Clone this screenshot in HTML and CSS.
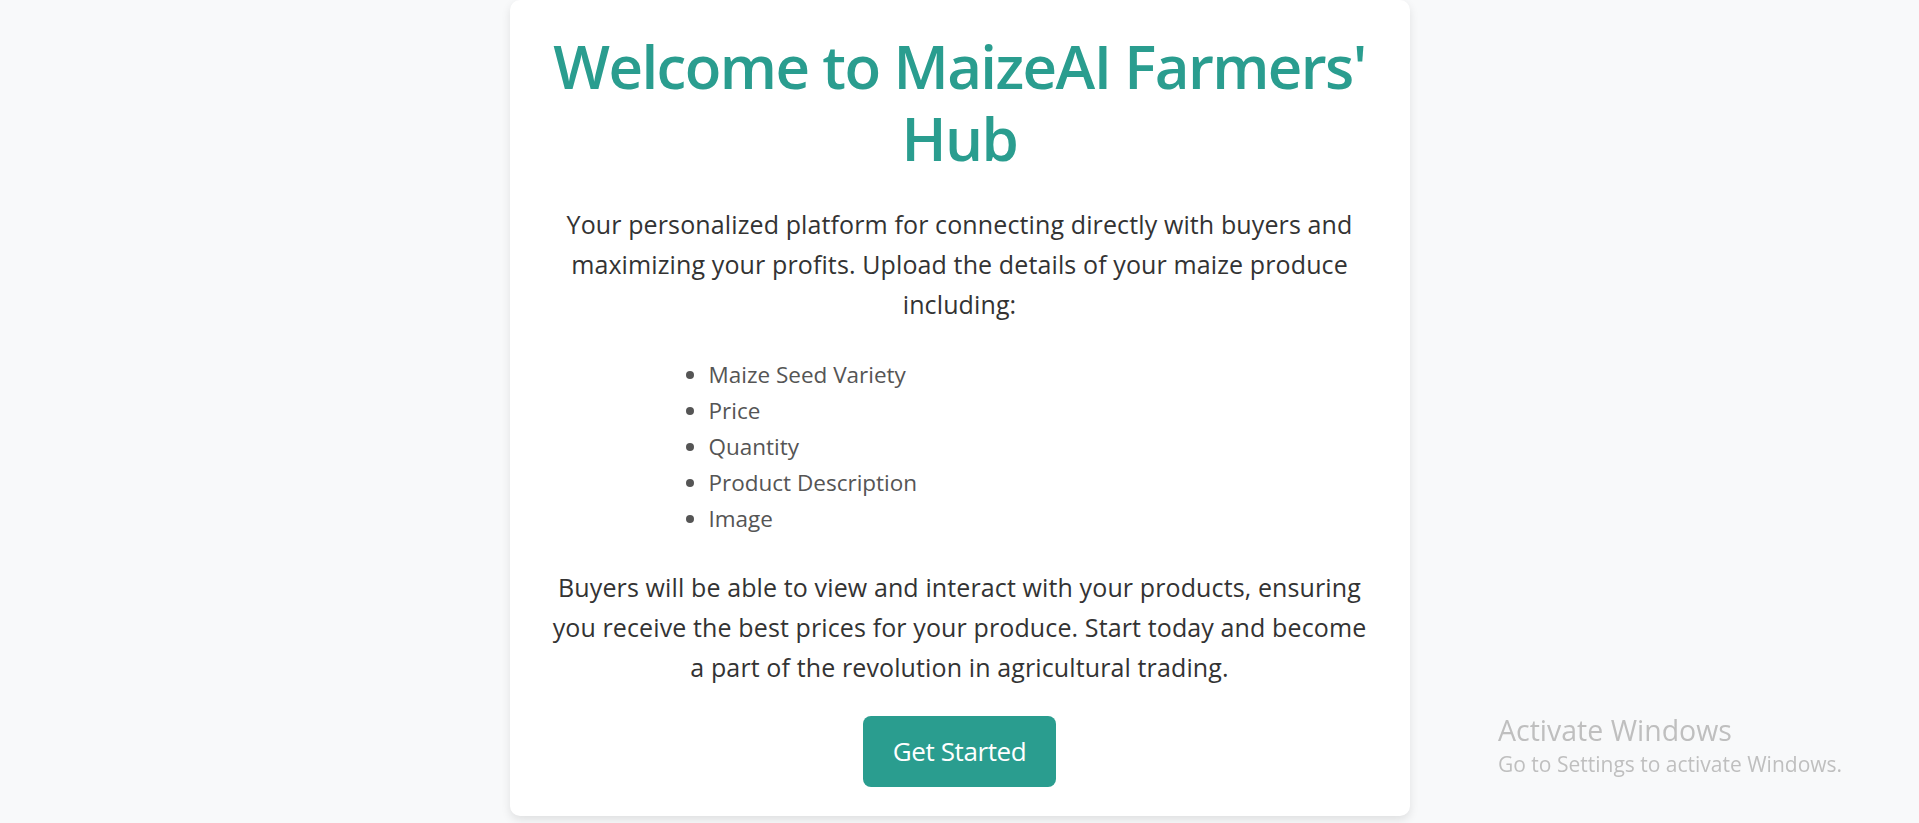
FILE: index.html
```html
<!DOCTYPE html>
<html lang="en">
<head>
<meta charset="utf-8">
<title>MaizeAI Farmers' Hub</title>
<link rel="stylesheet" href="styles.css">
</head>
<body>
<main class="card">
  <h1 class="title">Welcome to MaizeAI Farmers' Hub</h1>
  <p class="lead">Your personalized platform for connecting directly with buyers and maximizing your profits. Upload the details of your maize produce including:</p>
  <ul class="features">
    <li>Maize Seed Variety</li>
    <li>Price</li>
    <li>Quantity</li>
    <li>Product Description</li>
    <li>Image</li>
  </ul>
  <p class="lead">Buyers will be able to view and interact with your products, ensuring you receive the best prices for your produce. Start today and become a part of the revolution in agricultural trading.</p>
  <button class="cta">Get Started</button>
</main>
<div class="watermark">
  <div class="wm-title">Activate Windows</div>
  <div class="wm-sub">Go to Settings to activate Windows.</div>
</div>
</body>
</html>
```
FILE: styles.css
```css
html, body {
  margin: 0;
  padding: 0;
}
body {
  background: #f8f9fa;
  font-family: "Segoe UI", "Open Sans", "Noto Sans", sans-serif;
  color: #333;
  min-height: 100vh;
}
.card {
  width: 900px;
  box-sizing: border-box;
  margin: 0 auto;
  background: #fff;
  border-radius: 10px;
  box-shadow: 0 4px 10px rgba(0, 0, 0, 0.1);
  padding: 30px 40px 29px;
  text-align: center;
  display: flex;
  flex-direction: column;
  align-items: center;
}
.title {
  margin: 0 0 30px;
  font-size: 60px;
  line-height: 72px;
  font-weight: 600;
  color: #2a9d8f;
  letter-spacing: -1.6px;
}
.lead {
  margin: 0;
  font-size: 25px;
  line-height: 40px;
  color: #333;
  letter-spacing: 0.12px;
}
.features {
  align-self: stretch;
  text-align: left;
  width: 502px;
  margin: 33px auto 30px;
  padding: 0;
  font-size: 22.5px;
  line-height: 36px;
  color: #555;
  letter-spacing: 0;
}
.cta {
  margin-top: 29px;
  background: #2a9d8f;
  color: #fff;
  border: none;
  border-radius: 8px;
  font-family: inherit;
  font-size: 26px;
  line-height: 40px;
  padding: 15px 30px 16px;
  letter-spacing: -0.4px;
  cursor: pointer;
}
.watermark {
  position: fixed;
  left: 1498px;
  top: 712px;
  color: #bfbfbf;
  pointer-events: none;
}
.wm-title {
  font-size: 28.5px;
  line-height: 36px;
}
.wm-sub {
  font-size: 21px;
  line-height: 32px;
}
```
